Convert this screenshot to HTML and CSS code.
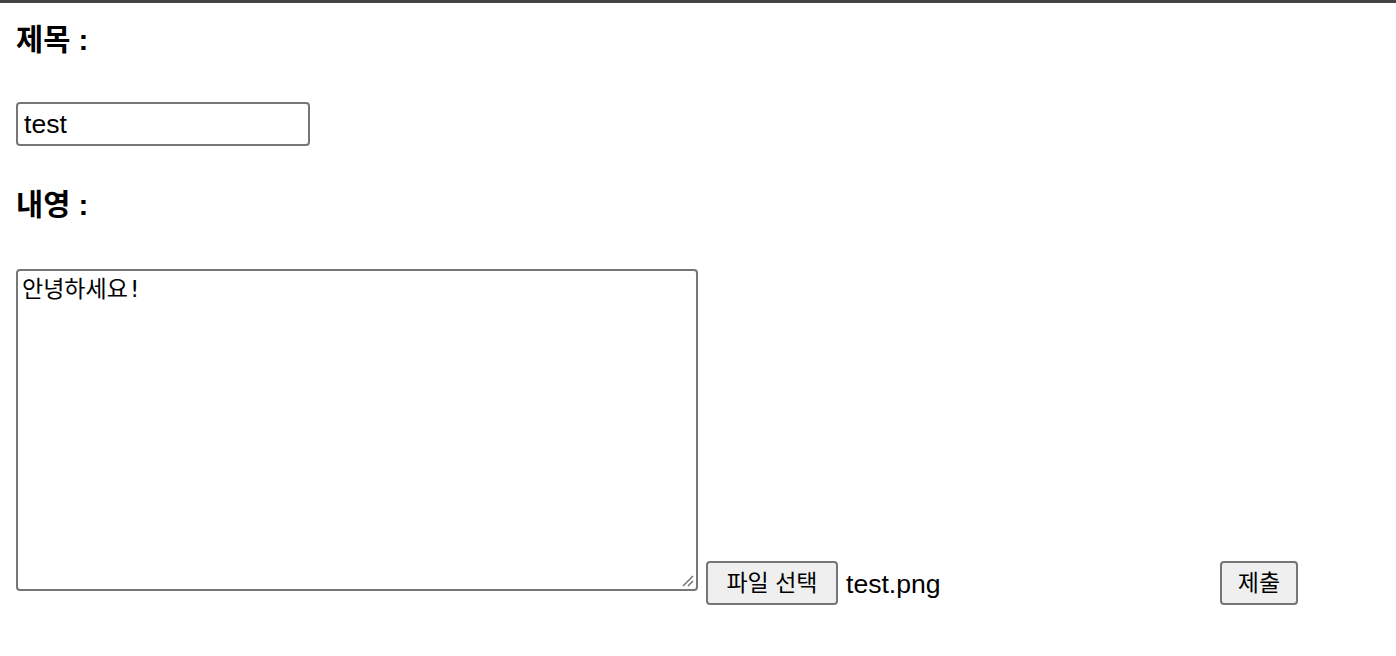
FILE: index.html
```html
<!DOCTYPE html>
<html lang="ko">
<head>
<meta charset="utf-8">
<title>글쓰기</title>
<link rel="stylesheet" href="styles.css">
</head>
<body>
<form class="page">
  <div class="label">제목 :</div>
  <input class="title-input" type="text" value="test">
  <div class="label label-content">내영 :</div>
  <div class="bottom-row">
    <div class="area-wrap">
      <textarea class="content">안녕하세요!</textarea>
      <svg class="grip" width="14" height="14" viewBox="0 0 14 14" aria-hidden="true">
        <path d="M13 3 L3 13 M13 8 L8 13" stroke="#6b6b6b" stroke-width="1.4" fill="none"/>
      </svg>
    </div>
    <div class="file-box">
      <button type="button" class="btn btn-file">파일 선택</button>
      <span class="file-name">test.png</span>
    </div>
    <button type="button" class="btn btn-submit">제출</button>
  </div>
</form>
</body>
</html>
```

FILE: styles.css
```css
html, body {
  margin: 0;
  padding: 0;
  background: #ffffff;
}

body {
  border-top: 3px solid #434343;
  color: #000;
  font-family: "Liberation Sans", "Noto Sans CJK KR", sans-serif;
}

.page {
  display: flex;
  flex-direction: column;
  align-items: flex-start;
  padding: 20px 16px 0 16px;
}

.label {
  font-family: "Liberation Sans", "Noto Sans CJK KR", sans-serif;
  font-weight: 700;
  font-size: 29.5px;
  line-height: 34px;
  height: 34px;
}

.title-input {
  box-sizing: border-box;
  margin: 45px 0 0 0;
  width: 294px;
  height: 44px;
  border: 2px solid #767676;
  border-radius: 4px;
  padding: 0 5px 0 6px;
  font-family: "Liberation Sans", sans-serif;
  font-size: 26.6px;
  color: #000;
  background: #fff;
  outline: none;
}

.label-content {
  margin-top: 42px;
}

.bottom-row {
  display: flex;
  align-items: flex-start;
  margin-top: 47px;
}

.area-wrap {
  position: relative;
  width: 682px;
  height: 322px;
}

.content {
  box-sizing: border-box;
  display: block;
  margin: 0;
  width: 682px;
  height: 322px;
  border: 2px solid #767676;
  border-radius: 4px;
  padding: 4px;
  font-family: "DejaVu Sans Mono", "Noto Sans CJK KR", monospace;
  font-size: 23px;
  line-height: 28px;
  color: #000;
  background: #fff;
  resize: none;
  outline: none;
}

.grip {
  position: absolute;
  right: 4px;
  bottom: 4px;
}

.file-box {
  display: flex;
  align-items: center;
  width: 506px;
  margin: 292px 0 0 8px;
  gap: 8px;
}

.btn {
  box-sizing: border-box;
  height: 44px;
  margin: 0;
  padding: 0 0 4px 0;
  border: 2px solid #767676;
  border-radius: 4px;
  background: #efefef;
  color: #000;
  font-family: "Noto Sans CJK KR", sans-serif;
  font-size: 23px;
  line-height: 34px;
  text-align: center;
}

.btn-file {
  width: 132px;
}

.file-name {
  font-family: "Liberation Sans", sans-serif;
  font-size: 26.6px;
  line-height: 32px;
  padding-top: 1px;
}

.btn-submit {
  width: 78px;
  margin: 292px 0 0 8px;
}
```
